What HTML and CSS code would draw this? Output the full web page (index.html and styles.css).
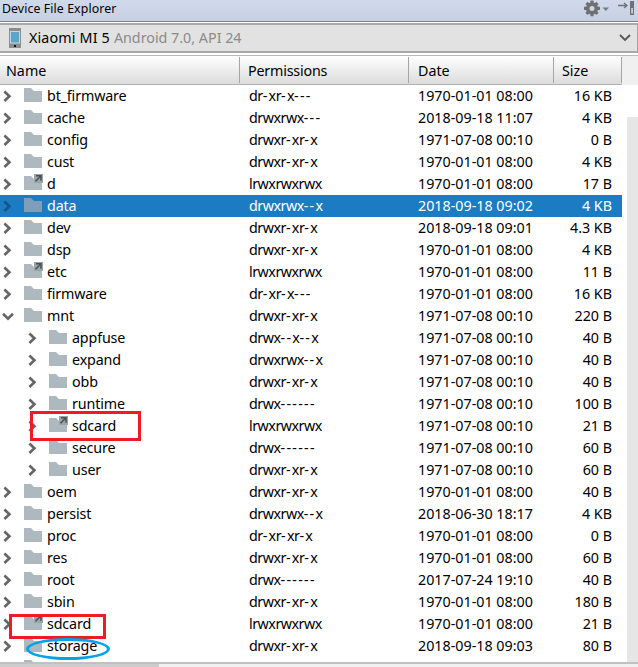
FILE: index.html
```
<!DOCTYPE html>
<html lang="en">
<head>
<meta charset="utf-8">
<title>Device File Explorer</title>
<link rel="stylesheet" href="styles.css">
</head>
<body>
<svg class="defs" aria-hidden="true">
  <symbol id="right" viewBox="0 0 14 14"><path d="M3.4 2.5l5 4.7-5 4.7" fill="none" stroke="currentColor" stroke-width="2.7"/></symbol>
  <symbol id="down" viewBox="0 0 14 14"><path d="M2 4.8l5 4.8 5-4.8" fill="none" stroke="currentColor" stroke-width="2.7"/></symbol>
  <symbol id="folder" viewBox="0 0 19 18"><path d="M0 2h7l3 3h8v11H0z" fill="currentColor"/></symbol>
  <symbol id="link" viewBox="0 0 19 18"><path d="M0 2h7l3 3h8v11H0z" fill="currentColor"/><path d="M10 0h9v9h-9z" fill="#9ba5ab"/><path d="M12 1.8h5v5M16.5 2.3l-5 5" fill="none" stroke="#4c5357" stroke-width="1.6"/></symbol>
</svg>
<div class="titlebar">
  <span class="title">Device File Explorer</span>
  <svg class="tools" width="56" height="21" viewBox="0 0 56 21">
    <g stroke="#6f7072" stroke-width="3.2"><path d="M10 .5v15.8M2 8.4h16M4.5 2.9l11 11M15.5 2.9l-11 11"/></g>
    <circle cx="10" cy="8.4" r="4.3" fill="#cdd6e7" stroke="#6f7072" stroke-width="3.6"/>
    <path d="M20.5 7.5h6.5l-3.2 3.5z" fill="#77797d"/>
    <path d="M36 5.5h9M42 3l3 2.5-3 2.5" fill="none" stroke="#6f7072" stroke-width="1.3"/>
    <path d="M48 1h4v14h-4z" fill="#6f7072"/><path d="M49.4 8h1.3v5.5h-1.3z" fill="#eef1f7"/>
  </svg>
</div>
<div class="device">
  <svg class="phone" width="13" height="20" viewBox="0 0 13 20"><path d="M0 0h12v20H0z" fill="#8d8d8d"/><path d="M1 3h10v12.5H1z" fill="#b9dced"/><path d="M2 4h8v10.5H2z" fill="#5da4c7"/><path d="M5 17h2v2H5z" fill="#111"/></svg>
  <span class="model">Xiaomi MI 5</span><span class="api">Android 7.0, API 24</span>
  <svg class="caret" width="12" height="8" viewBox="0 0 12 8"><path d="M1 1l5 5 5-5" fill="none" stroke="#555" stroke-width="1.8"/></svg>
</div>
<div class="head">
  <div class="cell">Name</div><div class="cell permissions">Permissions</div><div class="cell">Date</div><div class="cell">Size</div>
</div>
<div class="body">
  <div class="rows" id="rows"></div>
  <div class="scroll"></div>
  <div class="mark box-a"></div>
  <div class="mark box-b"></div>
  <div class="mark oval"></div>
</div>
<div class="hscroll"><div class="thumb"></div></div>
<script src="rows.js"></script>
</body>
</html>
```
FILE: styles.css
```
* { box-sizing: border-box; }
body { margin: 0; width: 638px; height: 667px; overflow: hidden; display: flex; flex-direction: column; background: #fff; color: #000; font: 14.3px/22px "Noto Sans", sans-serif; white-space: pre; }
.defs { display: none; }
svg { flex: none; }
.titlebar { flex: none; height: 22px; display: flex; justify-content: space-between; background: linear-gradient(#d1daeb, #c6d0e3); border-bottom: 1px solid #7d828d; font-size: 12.3px; line-height: 17px; padding-left: 2px; }
.title { letter-spacing: .1px; }
.device { flex: none; height: 30px; margin-top: 1px; border: 2px solid #a9a9a9; border-left: 0; border-right-width: 1px; background: #e2e2e2; display: flex; align-items: center; padding: 0 6px 0 9px; }
.model { margin-left: 7px; letter-spacing: .15px; }
.api { margin-left: 4px; color: #8b8b8b; }
.caret { margin-left: auto; }
.head { flex: none; height: 30px; margin-top: 2px; border-top: 1px solid #b9b9b9; background: #f0f0f0; display: grid; grid-template-columns: 240px 169px 145px 68px; }
.head .cell { position: relative; height: 29px; padding: 3px 0 0 9px; line-height: 24px; background: linear-gradient(#fff, #dcdcdc); border-bottom: 1px solid #b0b0b0; }
.head .cell:first-child { padding-left: 6px; }
.head .cell:last-child { padding-left: 8px; }
.head .permissions { padding-left: 8px; letter-spacing: -.2px; }
.head .cell::after { content: ""; position: absolute; right: 0; top: 1px; bottom: 1px; width: 1px; background: #a5a5a5; }
.body { flex: none; position: relative; height: 577px; display: flex; overflow: hidden; }
.rows { width: 622px; }
.row { height: 22px; display: grid; grid-template-columns: 249px 169px 115px 79px; }
.name { display: flex; align-items: flex-start; letter-spacing: -.15px; }
.name.child { padding-left: 25px; }
.arrow { width: 14px; height: 14px; margin: 4px 0 0 1px; color: #666; }
.icon { width: 19px; height: 18px; margin: 1px 4px 0 9px; color: #adb8bf; }
.perm { letter-spacing: -.5px; }
.dash { letter-spacing: 1.3px; }
.size { text-align: right; }
.selected { background: #1b7cc4; color: #fff; }
.selected .arrow { color: #135789; }
.selected .icon { color: #7f9fb9; }
.scroll { width: 11px; margin: 32px 0 0 5px; background: #e6e6e6; }
.mark { position: absolute; border: 3px solid #ed1c24; }
.box-a { left: 30px; top: 326px; width: 111px; height: 30px; }
.box-b { left: 9px; top: 529px; width: 97px; height: 25px; }
.oval { left: 26px; top: 553px; width: 84px; height: 22px; border-color: #00a2e8; border-radius: 50%; }
.hscroll { flex: none; height: 5px; border-top: 2px solid #c1c1c1; background: #f1f1f1; }
.thumb { width: 159px; height: 3px; background: #cdcdcd; }
```
FILE: rows.js
```
const entries = [
  ["bt_firmware", "dr-xr-x---", "1970-01-01 08:00", "16 KB"],
  ["cache", "drwxrwx---", "2018-09-18 11:07", "4 KB"],
  ["config", "drwxr-xr-x", "1971-07-08 00:10", "0 B"],
  ["cust", "drwxr-xr-x", "1970-01-01 08:00", "4 KB"],
  ["d", "lrwxrwxrwx", "1970-01-01 08:00", "17 B"],
  ["data", "drwxrwx--x", "2018-09-18 09:02", "4 KB", "selected"],
  ["dev", "drwxr-xr-x", "2018-09-18 09:01", "4.3 KB"],
  ["dsp", "drwxr-xr-x", "1970-01-01 08:00", "4 KB"],
  ["etc", "lrwxrwxrwx", "1970-01-01 08:00", "11 B"],
  ["firmware", "dr-xr-x---", "1970-01-01 08:00", "16 KB"],
  ["mnt", "drwxr-xr-x", "1971-07-08 00:10", "220 B", "open"],
  ["appfuse", "drwx--x--x", "1971-07-08 00:10", "40 B", "child"],
  ["expand", "drwxrwx--x", "1971-07-08 00:10", "40 B", "child"],
  ["obb", "drwxr-xr-x", "1971-07-08 00:10", "40 B", "child"],
  ["runtime", "drwx------", "1971-07-08 00:10", "100 B", "child"],
  ["sdcard", "lrwxrwxrwx", "1971-07-08 00:10", "21 B", "child"],
  ["secure", "drwx------", "1971-07-08 00:10", "60 B", "child"],
  ["user", "drwxr-xr-x", "1971-07-08 00:10", "60 B", "child"],
  ["oem", "drwxr-xr-x", "1970-01-01 08:00", "40 B"],
  ["persist", "drwxrwx--x", "2018-06-30 18:17", "4 KB"],
  ["proc", "dr-xr-xr-x", "1970-01-01 08:00", "0 B"],
  ["res", "drwxr-xr-x", "1970-01-01 08:00", "60 B"],
  ["root", "drwx------", "2017-07-24 19:10", "40 B"],
  ["sbin", "drwxr-xr-x", "1970-01-01 08:00", "180 B"],
  ["sdcard", "lrwxrwxrwx", "1970-01-01 08:00", "21 B"],
  ["storage", "drwxr-xr-x", "2018-09-18 09:03", "80 B"],
  ["", "", "", "", "cut"]
];
const spaced = perm => perm.replace(/-+/g, '<span class="dash">$&</span>');
document.getElementById("rows").innerHTML = entries.map(([name, perm, date, size, state = ""]) => `
<div class="row ${state}"><div class="name ${state}"><svg class="arrow">${state === "cut" ? "" : `<use href="#${state === "open" ? "down" : "right"}"/>`}</svg><svg class="icon"><use href="#${perm[0] === "l" ? "link" : "folder"}"/></svg><span>${name}</span></div><div class="perm">${spaced(perm)}</div><div class="date">${date}</div><div class="size">${size}</div></div>`).join("").replace(/\n/g, "");
```
